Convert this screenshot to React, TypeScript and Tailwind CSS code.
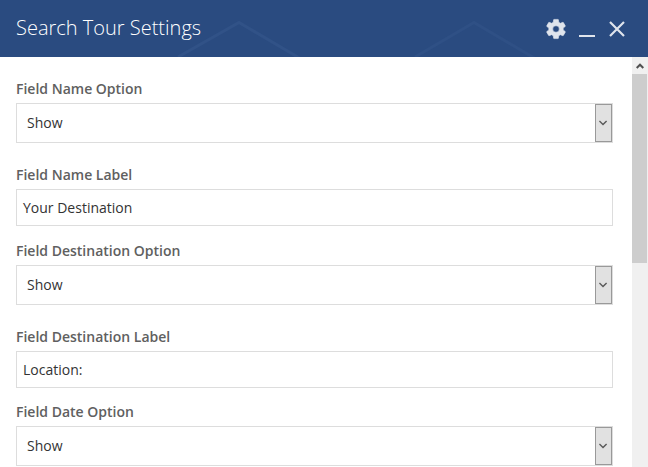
type Field = { label: string; value: string; kind: "select" | "input"; gap: string };

const fields: Field[] = [
  { label: "Field Name Option", value: "Show", kind: "select", gap: "mb-[22px]" },
  { label: "Field Name Label", value: "Your Destination", kind: "input", gap: "mb-[15px]" },
  { label: "Field Destination Option", value: "Show", kind: "select", gap: "mb-[22px]" },
  { label: "Field Destination Label", value: "Location:", kind: "input", gap: "mb-[14px]" },
  { label: "Field Date Option", value: "Show", kind: "select", gap: "" },
];

function GearIcon() {
  return (
    <svg width="24" height="24" viewBox="0 0 24 24" fill="currentColor" stroke="currentColor" strokeWidth="0.6" fillRule="evenodd">
      <path d="M19.14 12.94c.04-.3.06-.61.06-.94 0-.32-.02-.64-.07-.94l2.03-1.58c.18-.14.23-.41.12-.61l-1.92-3.32c-.12-.22-.37-.29-.59-.22l-2.39.96c-.5-.38-1.03-.7-1.62-.94l-.36-2.54c-.04-.24-.24-.41-.48-.41h-3.84c-.24 0-.43.17-.47.41l-.36 2.54c-.59.24-1.13.57-1.62.94l-2.39-.96c-.22-.08-.47 0-.59.22l-1.91 3.32c-.12.21-.08.47.12.61l2.03 1.58c-.05.3-.09.63-.09.94s.02.64.07.94l-2.03 1.58c-.18.14-.23.41-.12.61l1.92 3.32c.12.22.37.29.59.22l2.39-.96c.5.38 1.03.7 1.62.94l.36 2.54c.05.24.24.41.48.41h3.84c.24 0 .44-.17.47-.41l.36-2.54c.59-.24 1.13-.56 1.62-.94l2.39.96c.22.08.47 0 .59-.22l1.92-3.32c.12-.22.07-.47-.12-.61zM12 15.300a3.300 3.300 0 1 1 0-6.600 3.300 3.300 0 0 1 0 6.600z" />
    </svg>
  );
}

function SelectBox({ value }: { value: string }) {
  return (
    <div className="flex h-10 items-stretch justify-between border border-[#dddddd] bg-white">
      <span className="pl-2.5 leading-[38px]">{value}</span>
      <span className="flex w-[17px] items-center justify-center border border-[#999999] bg-[#e1e1e1]">
        <svg width="9" height="6" viewBox="0 0 9 6" fill="none" stroke="#585858" strokeWidth="1.4">
          <path d="M.4 1L4 4.600 7.600 1" />
        </svg>
      </span>
    </div>
  );
}

function Header() {
  return (
    <header className="relative flex h-[57px] shrink-0 items-center justify-between bg-[#2a4b80] text-white">
      <svg className="absolute inset-0" width="648" height="57" fill="none" strokeWidth="3">
        <path stroke="#315287" d="M178 57L239 22.500L301 59" />
        <path stroke="#2f5085" d="M415 57L474 22.500L536 59" />
      </svg>
      <h1 className="relative pb-px pl-4 text-[20px] font-light leading-7">Search Tour Settings</h1>
      <div className="relative flex items-center pr-[23px] pt-px text-[#dfe4ec]">
        <GearIcon />
        <span className="ml-[11px] mt-[14px] h-0.5 w-4 bg-[#dfe4ec]" />
        <svg className="ml-[14px]" width="16" height="16" viewBox="0 0 16 16" fill="none" stroke="currentColor" strokeWidth="2.200">
          <path d="M1 1l14 14M15 1L1 15" />
        </svg>
      </div>
    </header>
  );
}

export default function App() {
  return (
    <div className="flex h-[467px] w-[648px] flex-col overflow-hidden bg-white font-['Open_Sans',sans-serif] text-[14px] text-[#333333]">
      <Header />
      <div className="flex min-h-0 flex-1">
        <main className="flex-1 pl-4 pr-[19px] pt-[22px]">
          {fields.map((f) => (
            <div key={f.label} className={f.gap}>
              <div className="mb-1 h-5 font-semibold leading-5 text-[#606060]">{f.label}</div>
              {f.kind === "select" ? (
                <SelectBox value={f.value} />
              ) : (
                <div className="h-[37px] border border-[#dddddd] pl-1.5 leading-[35px]">{f.value}</div>
              )}
            </div>
          ))}
        </main>
        <aside className="w-4 bg-[#f0f0f0]">
          <div className="flex h-[17px] items-center justify-center">
            <svg width="8" height="6" viewBox="0 0 8 6" fill="none" stroke="#505050" strokeWidth="2">
              <path d="M.7 5L4 1.700 7.300 5" />
            </svg>
          </div>
          <div className="h-[189px] w-[15px] bg-[#cdcdcd]" />
        </aside>
      </div>
    </div>
  );
}
